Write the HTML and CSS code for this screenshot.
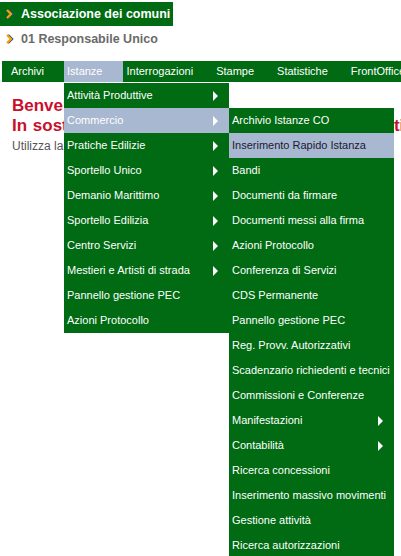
FILE: index.html
```html
<!DOCTYPE html>
<html lang="it">
<head>
<meta charset="utf-8">
<link rel="stylesheet" href="styles.css">
</head>
<body>
<div class="page">
  <div class="assoc"><svg class="chev" width="10" height="10" viewBox="0 0 10 10"><polyline points="2,1 6,5 2,9" fill="none" stroke="#2a4a9a" stroke-width="2.4" transform="translate(1,0)"/><polyline points="2,1 6,5 2,9" fill="none" stroke="#f5a400" stroke-width="2.2"/></svg>Associazione dei comuni</div>
  <div class="resp"><svg class="chev" width="10" height="10" viewBox="0 0 10 10"><polyline points="2,1 6,5 2,9" fill="none" stroke="#2a4a9a" stroke-width="2.4" transform="translate(1,0)"/><polyline points="2,1 6,5 2,9" fill="none" stroke="#f5a400" stroke-width="2.2"/></svg>01 Responsabile Unico</div>

  <nav class="menubar">
    <div class="mi mi-archivi">Archivi</div>
    <div class="mi active">Istanze
      <ul class="dd dd1">
        <li>Attività Produttive<i class="tri"></i></li>
        <li class="hl">Commercio<i class="tri"></i>
          <ul class="dd dd2">
            <li>Archivio Istanze CO</li>
            <li class="hl dark">Inserimento Rapido Istanza</li>
            <li>Bandi</li>
            <li>Documenti da firmare</li>
            <li>Documenti messi alla firma</li>
            <li>Azioni Protocollo</li>
            <li>Conferenza di Servizi</li>
            <li>CDS Permanente</li>
            <li>Pannello gestione PEC</li>
            <li>Reg. Provv. Autorizzativi</li>
            <li>Scadenzario richiedenti e tecnici</li>
            <li>Commissioni e Conferenze</li>
            <li>Manifestazioni<i class="tri"></i></li>
            <li>Contabilità<i class="tri"></i></li>
            <li>Ricerca concessioni</li>
            <li>Inserimento massivo movimenti</li>
            <li>Gestione attività</li>
            <li>Ricerca autorizzazioni</li>
          </ul>
        </li>
        <li>Pratiche Edilizie<i class="tri"></i></li>
        <li>Sportello Unico<i class="tri"></i></li>
        <li>Demanio Marittimo<i class="tri"></i></li>
        <li>Sportello Edilizia<i class="tri"></i></li>
        <li>Centro Servizi<i class="tri"></i></li>
        <li>Mestieri e Artisti di strada<i class="tri"></i></li>
        <li>Pannello gestione PEC</li>
        <li>Azioni Protocollo</li>
      </ul>
    </div>
    <div class="mi mi-interr">Interrogazioni</div>
    <div class="mi mi-stampe">Stampe</div>
    <div class="mi mi-stat">Statistiche</div>
    <div class="mi">FrontOffice</div>
  </nav>

  <div class="content">
    <h1 class="welcome">Benvenuto nel sistema<br><span class="ws">In sostituzione dei Responsabili Unici degli Enti</span></h1>
    <p class="hint">Utilizza la barra dei menu per accedere alle funzioni</p>
  </div>
</div>
</body>
</html>
```
FILE: styles.css
```css
html, body {
  margin: 0;
  padding: 0;
  background: #ffffff;
  overflow: hidden;
}
.page {
  position: relative;
  width: 401px;
  height: 556px;
  font-family: "Liberation Sans", Arial, sans-serif;
  font-size: 11px;
  overflow: hidden;
}
.assoc {
  margin-top: 2px;
  width: 173px;
  height: 24px;
  background: #006b12;
  color: #ffffff;
  font-weight: bold;
  font-size: 12.5px;
  white-space: nowrap;
  display: flex;
  align-items: center;
}
.chev {
  display: block;
  margin: 0 6px 0 5px;
  flex: none;
}
.resp {
  margin-top: 1px;
  height: 24px;
  color: #6a6a6a;
  font-weight: bold;
  font-size: 12.5px;
  white-space: nowrap;
  display: flex;
  align-items: center;
}
.menubar {
  margin-top: 10px;
  margin-left: 2px;
  height: 21px;
  background: #006b12;
  display: flex;
  align-items: stretch;
  white-space: nowrap;
}
.mi {
  position: relative;
  color: #ffffff;
  line-height: 21px;
  padding: 0 21px 0 3px;
}
.mi-archivi { margin-left: 6px; padding-right: 20px; }
.mi-interr { padding-right: 20px; }
.mi-stampe { padding-right: 20px; }
.mi-stat { padding-right: 20px; }
.mi.active {
  background: #a8b8d0;
}
.dd {
  list-style: none;
  margin: 0;
  padding: 0;
  position: absolute;
  width: 165px;
  background: #006b12;
  z-index: 5;
}
.dd1 {
  left: 0;
  top: 22px;
}
.dd2 {
  left: 165px;
  top: 0;
}
.dd li {
  position: relative;
  height: 25px;
  line-height: 25px;
  padding-left: 3px;
  color: #ffffff;
  white-space: nowrap;
}
.dd li.hl {
  background: #a8b8d0;
}
.dd li.dark {
  color: #1a1a30;
}
.tri {
  position: absolute;
  left: 149px;
  top: 8px;
  width: 0;
  height: 0;
  border-top: 5px solid transparent;
  border-bottom: 5px solid transparent;
  border-left: 5px solid #ffffff;
}
.content {
  padding: 14px 0 0 12px;
}
.welcome {
  margin: 0;
  color: #c8102e;
  font-size: 17px;
  line-height: 20px;
  font-weight: bold;
  white-space: nowrap;
}
.ws {
  word-spacing: 1px;
}
.hint {
  margin: 3px 0 0 0;
  color: #555555;
  font-size: 12px;
  white-space: nowrap;
}
```
